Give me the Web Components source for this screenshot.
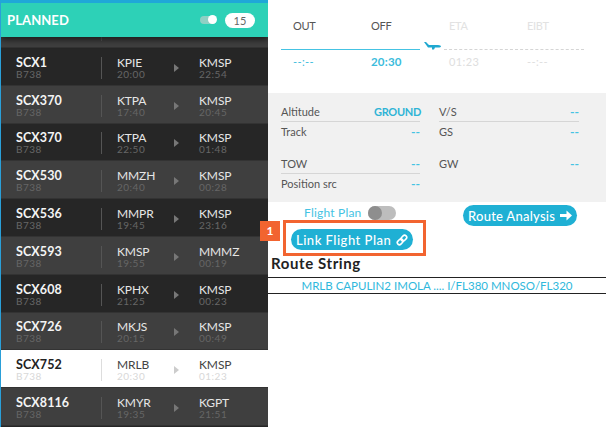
<!DOCTYPE html>
<html>
<head>
<meta charset="utf-8">
<title>Flight detail</title>
<style>
  html, body { margin: 0; padding: 0; background: #fff; }
  body { width: 606px; height: 427px; overflow: hidden; font-family: Lato, sans-serif; display: flex; }
</style>
</head>
<body>
<flight-list></flight-list>
<flight-detail></flight-detail>

<script>
// Left column: header bar + flight rows
const FLIGHTS = [
  ['', 'A332', '', '03:20', '', '19:09'],
  ['SCX1', 'B738', 'KPIE', '20:00', 'KMSP', '22:54'],
  ['SCX370', 'B738', 'KTPA', '17:40', 'KMSP', '20:45'],
  ['SCX370', 'B738', 'KTPA', '22:50', 'KMSP', '01:48'],
  ['SCX530', 'B738', 'MMZH', '20:40', 'KMSP', '00:28'],
  ['SCX536', 'B738', 'MMPR', '19:45', 'KMSP', '23:16'],
  ['SCX593', 'B738', 'KMSP', '19:55', 'MMMZ', '00:19'],
  ['SCX608', 'B738', 'KPHX', '21:25', 'KMSP', '00:23'],
  ['SCX726', 'B738', 'MKJS', '20:15', 'KMSP', '00:49'],
  ['SCX752', 'B738', 'MRLB', '20:30', 'KMSP', '01:23'],
  ['SCX8116', 'B738', 'KMYR', '19:35', 'KGPT', '21:51']
];

class FlightRow extends HTMLElement {
  constructor() {
    super();
    this.attachShadow({ mode: 'open' });
    const d = this.dataset;
    this.shadowRoot.innerHTML = `
      <style>
        :host {
          display: grid;
          grid-template-columns: 85px 73px 25px 1fr;
          height: 37.8px;
          box-sizing: border-box;
          padding: 3px 0 0 15px;
          align-items: center;
          background: #262626;
          color: #e6e6e6;
          font-family: Lato, sans-serif;
          border-bottom: 1px solid #333;
        }
        :host([alt]) { background: #3f3f3f; }
        :host([selected]) { background: #fff; color: #444; }
        .cell { display: flex; flex-direction: column; }
        .top { font-size: 12px; line-height: 13px; letter-spacing: -.1px; }
        .sub { font-size: 10px; line-height: 11px; color: #666; letter-spacing: .5px; }
        :host([selected]) .sub { color: #d8d8d8; }
        .id .top { font-size: 12.500px; font-weight: 700; color: #f4f4f4; letter-spacing: .1px; }
        :host([selected]) .id .top { color: #222; }
        .from { border-left: 1px solid #555; padding-left: 15px; height: 22px; justify-content: center; }
        :host([selected]) .from { border-left-color: #ddd; }
        .arrow { width: 0; height: 0; border-left: 5px solid #777; border-top: 4.500px solid transparent; border-bottom: 4.500px solid transparent; }
        :host([selected]) .arrow { border-left-color: #ccc; }
      </style>
      <div class="cell id"><span class="top">${d.id}</span><span class="sub">${d.type}</span></div>
      <div class="cell from"><span class="top">${d.from}</span><span class="sub">${d.dep}</span></div>
      <div class="arrow"></div>
      <div class="cell"><span class="top">${d.to}</span><span class="sub">${d.arr}</span></div>
    `;
  }
}
customElements.define('flight-row', FlightRow);

class FlightList extends HTMLElement {
  constructor() {
    super();
    this.attachShadow({ mode: 'open' });
    const rows = FLIGHTS.map((f, i) => {
      const [id, type, from, dep, to, arr] = f;
      const alt = i % 2 === 0 ? 'alt' : '';
      const sel = id === 'SCX752' ? 'selected' : '';
      return `<flight-row ${alt} ${sel} data-id="${id}" data-type="${type}" data-from="${from}" data-dep="${dep}" data-to="${to}" data-arr="${arr}"></flight-row>`;
    }).join('');
    this.shadowRoot.innerHTML = `
      <style>
        :host {
          display: block;
          flex: 0 0 268px;
          height: 427px;
          box-sizing: border-box;
          border-left: 1px solid #2a9fd8;
          border-top: 3px solid #1fa8d8;
          background: #262626;
          overflow: hidden;
          position: relative;
        }
        header {
          position: relative;
          z-index: 2;
          height: 34px;
          background: #2dd1b7;
          box-shadow: 0 3px 6px rgba(0,0,0,.55);
          display: flex;
          align-items: center;
          padding: 0 13px 0 6px;
          color: #fff;
          font: 700 13px Lato, sans-serif;
          letter-spacing: .1px;
        }
        .title { flex: 1; }
        .sw { width: 16px; height: 8px; border-radius: 4px; background: #8fd0c4; position: relative; margin-right: 9px; }
        .sw::after { content: ""; position: absolute; right: -1px; top: -1px; width: 9px; height: 9px; border-radius: 50%; background: #fff; }
        .count { width: 30px; height: 15px; border-radius: 8px; background: #fff; color: #666; font: 400 11px/15px Lato, sans-serif; text-align: center; }
        .rows { margin-top: -26.800px; }
      </style>
      <header><span class="title">PLANNED</span><span class="sw"></span><span class="count">15</span></header>
      <div class="rows">${rows}</div>
    `;
  }
}
customElements.define('flight-list', FlightList);

// Flight phase timeline
class FlightTimes extends HTMLElement {
  constructor() {
    super();
    this.attachShadow({ mode: 'open' });
    this.shadowRoot.innerHTML = `
      <style>
        :host { display: block; height: 93px; box-sizing: border-box; padding: 19px 22px 0 13px; font: 400 11px Lato, sans-serif; }
        .cols { display: grid; grid-template-columns: repeat(4, 78px); padding-left: 12px; }
        .lab { color: #555; line-height: 14px; letter-spacing: -.3px; }
        .off { color: #e2e2e2; }
        .line { display: flex; align-items: center; height: 12px; margin: 7px 0 3px; }
        .done { width: 139px; height: 1px; background: #45c3e3; margin-top: 6px; }
        .todo { flex: 1; border-top: 1px dashed #d5d5d5; margin-top: 6px; }
        svg { display: block; margin: 0 3px 0 4px; }
        .val { color: #3bbcdc; line-height: 14px; letter-spacing: .4px; }
        .val.b { font-weight: 700; font-size: 11.500px; letter-spacing: .2px; }
        .val.off { color: #dedede; }
      </style>
      <div class="cols">
        <span class="lab">OUT</span><span class="lab">OFF</span><span class="lab off">ETA</span><span class="lab off">EIBT</span>
      </div>
      <div class="line">
        <div class="done"></div>
        <svg width="17" height="8" viewBox="0 0 17 8"><path fill="#1fa8d0" d="M0 0l2 0 3 3 9 0c2 0 3 1 3 1.500s-1 1-3 1l-3 0-1 2-2 0 0-2-4 0z"/></svg>
        <div class="todo"></div>
      </div>
      <div class="cols">
        <span class="val">--:--</span><span class="val b">20:30</span><span class="val off">01:23</span><span class="val off">--:--</span>
      </div>
    `;
  }
}
customElements.define('flight-times', FlightTimes);

class StatRow extends HTMLElement {
  constructor() {
    super();
    this.attachShadow({ mode: 'open' });
    this.shadowRoot.innerHTML = `
      <style>
        :host { display: flex; justify-content: space-between; align-items: center; height: 20px; box-sizing: border-box; border-bottom: 1px solid transparent; font: 400 11px Lato, sans-serif; color: #555; }
        :host([line]) { border-bottom-color: #d6d6d6; }
        .v { color: #45c3e3; font-size: 12px; font-weight: 700; }
        :host([strong]) .v { color: #2fb4d6; font-size: 11px; letter-spacing: -.3px; margin-right: -1px; }
      </style>
      <span>${this.dataset.k}</span><span class="v">${this.dataset.v}</span>
    `;
  }
}
customElements.define('stat-row', StatRow);

class StatPanel extends HTMLElement {
  constructor() {
    super();
    this.attachShadow({ mode: 'open' });
    this.shadowRoot.innerHTML = `
      <style>
        :host { display: grid; grid-template-columns: 139px 140px; column-gap: 19px; height: 109px; box-sizing: border-box; padding: 9px 0 0 13px; background: #f1f1f1; }
        .gap { height: 12px; }
      </style>
      <div>
        <stat-row line strong data-k="Altitude" data-v="GROUND"></stat-row>
        <stat-row data-k="Track" data-v="--"></stat-row>
        <div class="gap"></div>
        <stat-row line data-k="TOW" data-v="--"></stat-row>
        <stat-row data-k="Position src" data-v="--"></stat-row>
      </div>
      <div>
        <stat-row line data-k="V/S" data-v="--"></stat-row>
        <stat-row data-k="GS" data-v="--"></stat-row>
        <div class="gap"></div>
        <stat-row data-k="GW" data-v="--"></stat-row>
      </div>
    `;
  }
}
customElements.define('stat-panel', StatPanel);

class PillButton extends HTMLElement {
  constructor() {
    super();
    this.attachShadow({ mode: 'open' });
    this.shadowRoot.innerHTML = `
      <style>
        :host { display: inline-flex; align-items: center; justify-content: space-between; box-sizing: border-box; height: 21px; padding: 0 5px; border-radius: 11px; background: #1fb0d4; color: #fff; font: 500 13px Lato, sans-serif; letter-spacing: .4px; white-space: nowrap; }
      </style>
      <slot></slot>
    `;
  }
}
customElements.define('pill-button', PillButton);

class PlanActions extends HTMLElement {
  constructor() {
    super();
    this.attachShadow({ mode: 'open' });
    this.shadowRoot.innerHTML = `
      <style>
        :host { display: block; position: relative; font: 400 12px Lato, sans-serif; letter-spacing: .2px; height: 52px; }
        .top { display: flex; align-items: flex-start; padding: 3px 29px 0 36px; }
        .fp { color: #45c3e3; line-height: 15px; margin-right: 7px; }
        .tg { width: 28px; height: 14px; border-radius: 7px; background: #bdbdbd; position: relative; margin-top: 1px; }
        .tg::before { content: ""; position: absolute; left: 0; top: 0; width: 14px; height: 14px; border-radius: 50%; background: #8e8e8e; }
        .sp { flex: 1; }
        .an { width: 114px; letter-spacing: .25px; }
        .link { margin: 3px 0 0 23px; width: 122px; letter-spacing: .5px; }
        .mark { position: absolute; left: 15px; top: 18px; width: 143px; height: 36px; box-sizing: border-box; border: 3px solid #f26430; }
        .badge { position: absolute; left: -8px; top: 19px; width: 20px; height: 20px; background: #f26430; color: #fff; font: 700 12px/20px Lato, sans-serif; text-align: center; }
        svg { display: block; flex: none; }
      </style>
      <div class="top">
        <span class="fp">Flight Plan</span><span class="tg"></span><span class="sp"></span>
        <pill-button class="an">Route Analysis
          <svg width="12" height="11" viewBox="0 0 12 11"><path fill="#fff" d="M0 4h6.500V.500l5.500 5-5.500 5V7H0z"/></svg>
        </pill-button>
      </div>
      <pill-button class="link">Link Flight Plan
        <svg width="12" height="12" viewBox="0 0 12 12" fill="none" stroke="#fff" stroke-width="1.600"><rect x="1" y="5.700" width="6.400" height="4.200" rx="2.100" transform="rotate(-45 4.200 7.800)"/><rect x="4.600" y="2.100" width="6.400" height="4.200" rx="2.100" transform="rotate(-45 7.800 4.200)"/></svg>
      </pill-button>
      <div class="mark"></div>
      <div class="badge">1</div>
    `;
  }
}
customElements.define('plan-actions', PlanActions);

class RouteString extends HTMLElement {
  constructor() {
    super();
    this.attachShadow({ mode: 'open' });
    this.shadowRoot.innerHTML = `
      <style>
        :host { display: block; font-family: Lato, sans-serif; }
        h3 { margin: 0 0 0 3px; font-size: 15px; line-height: 18px; font-weight: 700; color: #222; letter-spacing: .6px; }
        .val { margin-top: 5px; border-top: 1px solid #222; border-bottom: 1px solid #222; height: 15px; color: #2fb8dc; font-size: 11.500px; line-height: 16px; text-align: center; }
      </style>
      <h3>Route String</h3>
      <div class="val"><slot></slot></div>
    `;
  }
}
customElements.define('route-string', RouteString);

class FlightDetail extends HTMLElement {
  constructor() {
    super();
    this.attachShadow({ mode: 'open' });
    this.shadowRoot.innerHTML = `
      <style>
        :host { display: block; flex: 1; min-width: 0; height: 427px; background: #fff; }
      </style>
      <flight-times></flight-times>
      <stat-panel></stat-panel>
      <plan-actions></plan-actions>
      <route-string>MRLB CAPULIN2 IMOLA .... I/FL380 MNOSO/FL320</route-string>
    `;
  }
}
customElements.define('flight-detail', FlightDetail);
</script>
</body>
</html>
